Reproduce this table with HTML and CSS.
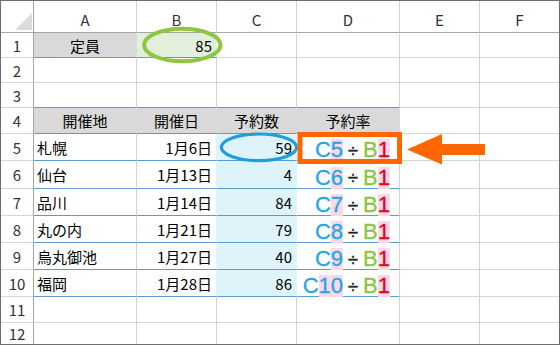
FILE: index.html
```html
<!DOCTYPE html>
<html lang="ja">
<head>
<meta charset="utf-8">
<title>予約率</title>
<link rel="stylesheet" href="styles.css">
</head>
<body>
<div class="page">
  <div class="sheet">
    <div class="corner"><svg class="tri" width="32" height="31" viewBox="0 0 32 31"><polygon points="14,29 31,29 31,12" fill="#dcdcdc"/></svg></div>
    <div class="ch">A</div><div class="ch">B</div><div class="ch">C</div><div class="ch">D</div><div class="ch">E</div><div class="ch last">F</div>

    <div class="rh">1</div><div class="cell ctr gray bl">定員</div><div class="cell r green bl">85</div><div class="cell"></div><div class="cell"></div><div class="cell"></div><div class="cell last"></div>
    <div class="rh">2</div><div class="cell"></div><div class="cell"></div><div class="cell"></div><div class="cell"></div><div class="cell"></div><div class="cell last"></div>
    <div class="rh">3</div><div class="cell bl"></div><div class="cell bl"></div><div class="cell bl"></div><div class="cell bl"></div><div class="cell"></div><div class="cell last"></div>
    <div class="rh">4</div><div class="cell ctr hd bl">開催地</div><div class="cell ctr hd bl">開催日</div><div class="cell ctr hd bl">予約数</div><div class="cell ctr hd bl">予約率</div><div class="cell"></div><div class="cell last"></div>

    <div class="rh">5</div><div class="cell l bl">札幌</div><div class="cell r bl tob">1月6日</div><div class="cell r bl cy">59</div><div class="cell f bl"><span class="cc">C</span><span class="cn">5</span><span class="op">÷</span><span class="bb">B</span><span class="bn">1</span></div><div class="cell"></div><div class="cell last"></div>
    <div class="rh">6</div><div class="cell l bl">仙台</div><div class="cell r bl tob">1月13日</div><div class="cell r bl cy">4</div><div class="cell f bl"><span class="cc">C</span><span class="cn">6</span><span class="op">÷</span><span class="bb">B</span><span class="bn">1</span></div><div class="cell"></div><div class="cell last"></div>
    <div class="rh">7</div><div class="cell l bl">品川</div><div class="cell r bl tob">1月14日</div><div class="cell r bl cy">84</div><div class="cell f bl"><span class="cc">C</span><span class="cn">7</span><span class="op">÷</span><span class="bb">B</span><span class="bn">1</span></div><div class="cell"></div><div class="cell last"></div>
    <div class="rh">8</div><div class="cell l bl">丸の内</div><div class="cell r bl tob">1月21日</div><div class="cell r bl cy">79</div><div class="cell f bl"><span class="cc">C</span><span class="cn">8</span><span class="op">÷</span><span class="bb">B</span><span class="bn">1</span></div><div class="cell"></div><div class="cell last"></div>
    <div class="rh">9</div><div class="cell l bl">烏丸御池</div><div class="cell r bl tob">1月27日</div><div class="cell r bl cy">40</div><div class="cell f bl"><span class="cc">C</span><span class="cn">9</span><span class="op">÷</span><span class="bb">B</span><span class="bn">1</span></div><div class="cell"></div><div class="cell last"></div>
    <div class="rh">10</div><div class="cell l bl">福岡</div><div class="cell r bl tob">1月28日</div><div class="cell r bl cy">86</div><div class="cell f bl"><span class="cc">C</span><span class="cn">10</span><span class="op">÷</span><span class="bb">B</span><span class="bn">1</span></div><div class="cell"></div><div class="cell last"></div>

    <div class="rh">11</div><div class="cell"></div><div class="cell"></div><div class="cell"></div><div class="cell"></div><div class="cell"></div><div class="cell last"></div>
    <div class="rh bottom">12</div><div class="cell bottom"></div><div class="cell bottom"></div><div class="cell bottom"></div><div class="cell bottom"></div><div class="cell bottom"></div><div class="cell last bottom"></div>
  </div>

  <svg class="overlay" width="560" height="345" viewBox="0 0 560 345">
    <ellipse cx="182.3" cy="45" rx="38.2" ry="16.3" fill="none" stroke="#8dc63f" stroke-width="4"/>
    <ellipse cx="259" cy="147.3" rx="37.7" ry="13.3" fill="none" stroke="#1b9fe0" stroke-width="3.2"/>
    <rect x="300" y="134.5" width="99.5" height="27" fill="none" stroke="#ff6600" stroke-width="5"/>
    <polygon points="407,149.5 442,134 442,144 485,144 485,155 442,155 442,164.5" fill="#ff6600"/>
  </svg>
</div>
</body>
</html>
```

FILE: styles.css
```css
* {
  box-sizing: border-box;
  margin: 0;
  padding: 0;
}

body {
  margin: 0;
  background: #ffffff;
  font-family: "Noto Sans CJK JP", "Noto Sans", sans-serif;
  font-size: 15px;
  color: #000000;
}

.page {
  position: relative;
  width: 560px;
  height: 345px;
  overflow: hidden;
}

.sheet {
  width: 560px;
  height: 345px;
  border: 1px solid #6e6e6e;
  display: grid;
  grid-template-columns: 33px 103px 80px 80px 103px 80px 1fr;
  grid-template-rows: 32px 25px 25px 25px 26px 27px 28px 27px 27px 27px 27px 26px 1fr;
}

.sheet > div {
  display: flex;
  align-items: center;
  line-height: 1;
  white-space: nowrap;
  border-right: 1px solid #d4d4d4;
  border-bottom: 1px solid #d4d4d4;
}

.sheet > .last {
  border-right: none;
}

.sheet > .bottom {
  border-bottom: none;
}

.corner {
  border-right-color: #a6a6a6 !important;
  border-bottom-color: #a6a6a6 !important;
  align-items: flex-start !important;
}

.tri {
  display: block;
}

.ch {
  justify-content: center;
  padding-top: 6px;
  color: #333333;
  border-bottom-color: #a6a6a6 !important;
}

.rh {
  justify-content: center;
  color: #333333;
  border-right-color: #a6a6a6 !important;
}

.l {
  justify-content: flex-start;
  padding-left: 3px;
}

.r {
  justify-content: flex-end;
  padding-right: 4px;
}

.ctr {
  justify-content: center;
}

.gray {
  background: #d9d9d9;
  border-right-color: #d9d9d9 !important;
}

.green {
  background: #e2efda;
  border-right-color: #e2efda !important;
}

.hd {
  background: #d9d9d9;
  border-right-color: #d9d9d9 !important;
}

.sheet > .bl {
  border-bottom-color: #5b9bd5;
}

.cy {
  background: #dff3fb;
  border-right-color: #dff3fb !important;
}

.tob {
  border-right-color: #dff3fb !important;
}

.f {
  justify-content: flex-end;
  padding-right: 9px;
  padding-top: 6px;
  font-family: "Liberation Sans", Arial, sans-serif;
  font-size: 22px;
}

.cc {
  color: #1ea6e8;
  -webkit-text-stroke: 0.3px #1ea6e8;
}

.cn {
  color: #1ea6e8;
  -webkit-text-stroke: 0.3px #1ea6e8;
  background: #fad8e7;
}

.op {
  display: inline-block;
  width: 20px;
  text-align: center;
  font-size: 19px;
  color: #222222;
  -webkit-text-stroke: 0.3px #222222;
}

.bb {
  color: #8cc63f;
  -webkit-text-stroke: 0.3px #8cc63f;
}

.bn {
  color: #e60020;
  -webkit-text-stroke: 0.3px #e60020;
  background: #fad8e7;
}

.overlay {
  position: absolute;
  top: 0;
  left: 0;
  pointer-events: none;
}
```
